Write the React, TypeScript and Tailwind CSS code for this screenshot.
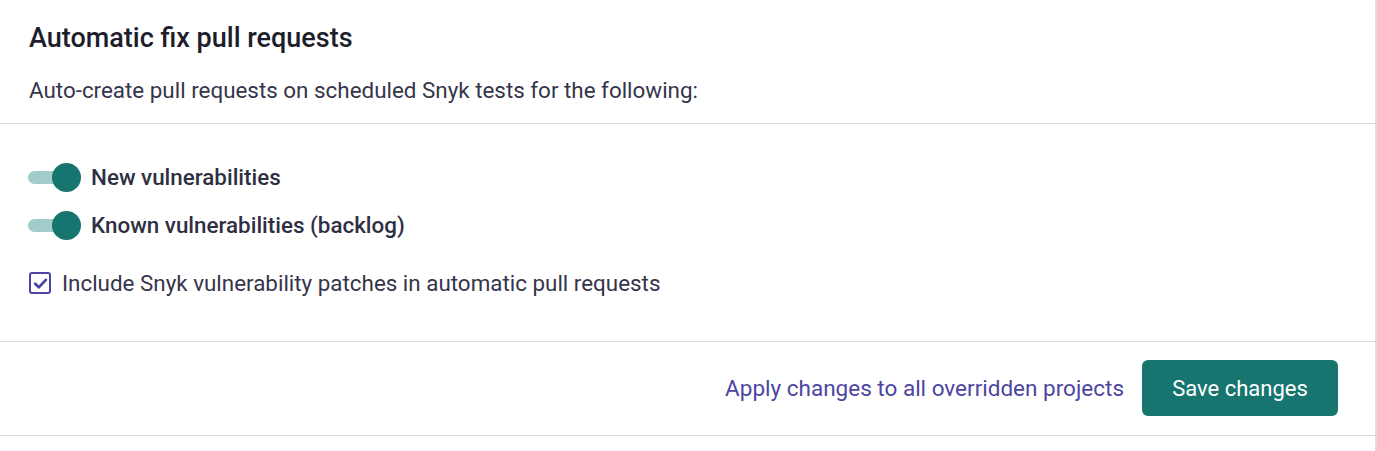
import React, { useState } from 'react';

const Toggle: React.FC<{ on: boolean; onChange: () => void }> = ({ on, onChange }) => (
  <button
    type="button"
    onClick={onChange}
    className="relative h-[29px] w-[53px] shrink-0"
    aria-pressed={on}
  >
    <span className="absolute left-0 top-[8px] h-[13px] w-[40px] rounded-full bg-[#a2cbc9]" />
    <span className="absolute left-[24px] top-0 h-[29px] w-[29px] rounded-full bg-[#177570]" />
  </button>
);

const App: React.FC = () => {
  const [newVulns, setNewVulns] = useState(true);
  const [known, setKnown] = useState(true);
  const [patches, setPatches] = useState(true);

  return (
    <div className="min-h-screen bg-white font-['Roboto',sans-serif] text-[#2f2f43]">
      <div className="w-[1377px] border-r-2 border-[#dddde3] bg-white min-h-[451px]">
        {/* Header */}
        <div className="border-b border-[#d9d9de] px-[29px] pt-[22px] pb-[19px]">
          <h2 className="text-[27px] font-medium leading-[32px] text-[#1d1d2b]">Automatic fix pull requests</h2>
          <p className="mt-[22px] text-[22.4px] leading-[28px] text-[#35354a]">
            Auto-create pull requests on scheduled Snyk tests for the following:
          </p>
        </div>

        {/* Options */}
        <div className="border-b border-[#d9d9de] px-[28px] pt-[39px] pb-[44px]">
          <div className="flex flex-col gap-[19px]">
            <label className="flex items-center gap-[10px]">
              <Toggle on={newVulns} onChange={() => setNewVulns(!newVulns)} />
              <span className="text-[22.4px] font-medium leading-[29px] text-[#2f2f43]">New vulnerabilities</span>
            </label>
            <label className="flex items-center gap-[10px]">
              <Toggle on={known} onChange={() => setKnown(!known)} />
              <span className="text-[22.4px] font-medium leading-[29px] text-[#2f2f43]">Known vulnerabilities (backlog)</span>
            </label>
          </div>
          <label className="mt-[29px] flex h-[28px] items-center gap-[11px]">
            <button
              type="button"
              onClick={() => setPatches(!patches)}
              className="ml-[1px] flex h-[22px] w-[22px] items-center justify-center rounded-[3px] border-2 border-[#4b45a1] bg-white"
            >
              {patches && (
                <svg width="15" height="15" viewBox="0 0 14 14" fill="none">
                  <path d="M2 7.3 L5.4 10.6 L12 3.6" stroke="#4b45a1" strokeWidth="2.6" strokeLinecap="round" strokeLinejoin="round" />
                </svg>
              )}
            </button>
            <span className="text-[22.4px] leading-[28px] text-[#35354a]">Include Snyk vulnerability patches in automatic pull requests</span>
          </label>
        </div>

        {/* Footer */}
        <div className="flex items-center justify-end gap-[18px] border-b border-[#d9d9de] pr-[37px] pt-[18px] pb-[19px]">
          <a href="#" className="text-[22.5px] leading-[28px] text-[#4b45a1]">Apply changes to all overridden projects</a>
          <button
            type="button"
            className="h-[56px] w-[196px] rounded-[6px] bg-[#177570] text-[22px] text-white"
          >
            Save changes
          </button>
        </div>
      </div>
    </div>
  );
};

export default App;
